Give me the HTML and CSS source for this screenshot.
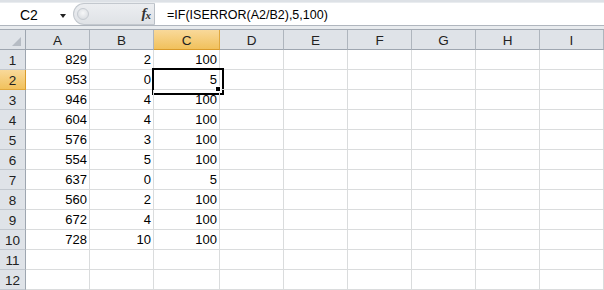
FILE: index.html
```
<!DOCTYPE html>
<html>
<head>
<meta charset="utf-8">
<link rel="stylesheet" href="styles.css">
</head>
<body>
<div class="app">
  <div class="topband"></div>
  <div class="fbar">
    <div class="namebox"><span class="nb-text">C2</span><span class="nb-arrow"></span></div>
    <div class="pill">
      <span class="knob"></span>
      <span class="fx">f<sub>x</sub></span>
    </div>
    <div class="finput">=IF(ISERROR(A2/B2),5,100)</div>
  </div>
  <div class="sep"></div>
  <div class="grid">
    <div class="corner"><span class="tri"></span></div>
    <div class="ch">A</div><div class="ch">B</div><div class="ch sel">C</div><div class="ch">D</div><div class="ch">E</div><div class="ch">F</div><div class="ch">G</div><div class="ch">H</div><div class="ch">I</div>

    <div class="rh">1</div><div class="c">829</div><div class="c">2</div><div class="c">100</div><div class="c"></div><div class="c"></div><div class="c"></div><div class="c"></div><div class="c"></div><div class="c"></div>
    <div class="rh sel">2</div><div class="c">953</div><div class="c">0</div><div class="c active">5<span class="handle"></span></div><div class="c"></div><div class="c"></div><div class="c"></div><div class="c"></div><div class="c"></div><div class="c"></div>
    <div class="rh">3</div><div class="c">946</div><div class="c">4</div><div class="c">100</div><div class="c"></div><div class="c"></div><div class="c"></div><div class="c"></div><div class="c"></div><div class="c"></div>
    <div class="rh">4</div><div class="c">604</div><div class="c">4</div><div class="c">100</div><div class="c"></div><div class="c"></div><div class="c"></div><div class="c"></div><div class="c"></div><div class="c"></div>
    <div class="rh">5</div><div class="c">576</div><div class="c">3</div><div class="c">100</div><div class="c"></div><div class="c"></div><div class="c"></div><div class="c"></div><div class="c"></div><div class="c"></div>
    <div class="rh">6</div><div class="c">554</div><div class="c">5</div><div class="c">100</div><div class="c"></div><div class="c"></div><div class="c"></div><div class="c"></div><div class="c"></div><div class="c"></div>
    <div class="rh">7</div><div class="c">637</div><div class="c">0</div><div class="c">5</div><div class="c"></div><div class="c"></div><div class="c"></div><div class="c"></div><div class="c"></div><div class="c"></div>
    <div class="rh">8</div><div class="c">560</div><div class="c">2</div><div class="c">100</div><div class="c"></div><div class="c"></div><div class="c"></div><div class="c"></div><div class="c"></div><div class="c"></div>
    <div class="rh">9</div><div class="c">672</div><div class="c">4</div><div class="c">100</div><div class="c"></div><div class="c"></div><div class="c"></div><div class="c"></div><div class="c"></div><div class="c"></div>
    <div class="rh">10</div><div class="c">728</div><div class="c">10</div><div class="c">100</div><div class="c"></div><div class="c"></div><div class="c"></div><div class="c"></div><div class="c"></div><div class="c"></div>
    <div class="rh">11</div><div class="c"></div><div class="c"></div><div class="c"></div><div class="c"></div><div class="c"></div><div class="c"></div><div class="c"></div><div class="c"></div><div class="c"></div>
    <div class="rh">12</div><div class="c"></div><div class="c"></div><div class="c"></div><div class="c"></div><div class="c"></div><div class="c"></div><div class="c"></div><div class="c"></div><div class="c"></div>
  </div>
</div>
</body>
</html>
```
FILE: styles.css
```
* { box-sizing: border-box; }
html, body { margin: 0; padding: 0; background: #fff; }
body { width: 604px; height: 290px; overflow: hidden; font-family: "Liberation Sans", Arial, sans-serif; color: #000; }
.app { display: flex; flex-direction: column; width: 604px; }
.topband { height: 3px; background: #dde1e6; border-bottom: 1px solid #e9ecef; }
.fbar { height: 22px; display: flex; background: #fff; }
.namebox { width: 73px; position: relative; display: flex; align-items: center; font-size: 14px; }
.nb-text { margin-left: 20px; margin-top: 1px; }
.nb-arrow { position: absolute; left: 60px; top: 11px; width: 0; height: 0; border-left: 3.5px solid transparent; border-right: 3.5px solid transparent; border-top: 4px solid #222; }
.pill { width: 82px; display: flex; align-items: center; justify-content: space-between; background: linear-gradient(#eceef1, #dfe2e6); border: 1px solid #c3c8ce; border-right: 1px solid #b9bfc6; border-radius: 11px 0 0 11px; padding: 0 4px 0 3px; }
.knob { width: 12px; height: 12px; border-radius: 50%; background: radial-gradient(circle at 50% 40%, #f6f7f8, #d3d7dc); border: 1px solid #c6cbd1; }
.fx { font-family: "Liberation Serif", serif; font-style: italic; font-weight: bold; font-size: 15px; color: #333; letter-spacing: -1px; margin-top: -2px; }
.fx sub { font-size: 11px; vertical-align: -1px; }
.finput { flex: 1; font-size: 12.5px; padding-left: 12px; display: flex; align-items: center; padding-top: 1px; }
.sep { height: 5px; background: #e8ebee; border-top: 1px solid #b0b6be; border-bottom: 1px solid #a4abb4; }
.grid { display: grid; grid-template-columns: 26px 64px 64px 66px 64px 64px 64px 64px 64px 64px; grid-auto-rows: 20px; grid-template-rows: 20px; }
.corner, .ch, .rh { background: #dfe3e8; color: #222; font-size: 13.5px; display: flex; align-items: center; justify-content: center; }
.corner { border-right: 1px solid #9ea6b0; border-bottom: 1px solid #9ea6b0; position: relative; }
.tri { position: absolute; right: 4px; bottom: 3px; width: 0; height: 0; border-left: 9px solid transparent; border-bottom: 9px solid #b6bcc4; }
.ch { border-right: 1px solid #aeb5bd; border-bottom: 1px solid #9ea6b0; padding-top: 1px; }
.rh { border-right: 1px solid #9ea6b0; border-bottom: 1px solid #c2c8cf; padding-top: 1px; }
.ch.sel, .rh.sel { background: linear-gradient(#f9d99a, #f1c15c); border-color: #e0a83e; }
.ch.sel { border-bottom: 1px solid #d99b2b; }
.rh.sel { border-right: 1px solid #d99b2b; }
.c { border-right: 1px solid #dadcdd; border-bottom: 1px solid #dadcdd; font-size: 13px; text-align: right; padding-right: 2px; line-height: 20px; position: relative; }
.active::after { content: ""; position: absolute; left: -2px; top: -2px; width: 68px; height: 23px; border: 2px solid #000; }
.handle { position: absolute; right: -2px; bottom: -3px; width: 6px; height: 6px; background: #000; border: 1px solid #fff; z-index: 2; }
```
